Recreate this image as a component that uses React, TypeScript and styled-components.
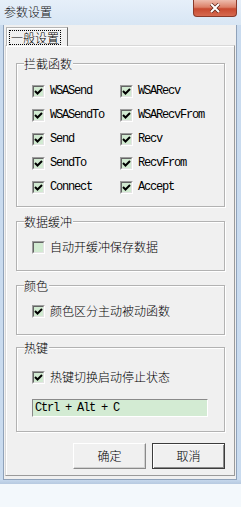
import React from 'react';
import styled, { createGlobalStyle } from 'styled-components';

const GlobalStyle = createGlobalStyle`
  body {
    margin: 0;
    background: #f3f8fc;
    font-family: "Noto Sans CJK SC", "Liberation Sans", sans-serif;
  }
`;

const cjk = `"Noto Sans CJK SC", "Liberation Sans", sans-serif`;
const mono = `"Liberation Mono", "Noto Sans CJK SC", monospace`;

const Window = styled.div`
  width: 241px;
  display: flex;
  flex-direction: column;
  background: linear-gradient(90deg, #c9dbef 0%, #dde9f6 50%, #c9dbef 100%);
`;

const TitleBar = styled.div`
  height: 25px;
  display: flex;
  justify-content: space-between;
  background: linear-gradient(#e6eff9, #d8e6f4);
`;

const Title = styled.div`
  padding: 4px 0 0 4px;
  font: 300 12px/15px ${cjk};
  color: #111;
`;

const CloseButton = styled.div`
  width: 44px;
  height: 17px;
  margin-right: 4px;
  box-sizing: border-box;
  border: 1px solid #8a3a2a;
  border-top: none;
  border-radius: 0 0 4px 4px;
  background: linear-gradient(#eebcad 0%, #dc8068 45%, #c84a30 55%, #d66a50 100%);
  display: flex;
  align-items: center;
  justify-content: center;
`;

const Client = styled.div`
  height: 455px;
  margin: 0 4px 0 3px;
  box-sizing: border-box;
  border: 1px solid #8fa2ba;
  border-top: none;
  background: #f0f0f0;
  display: flex;
  flex-direction: column;
  padding: 2px 1px 3px 1px;
`;

const BottomFrame = styled.div`
  height: 4px;
  background: linear-gradient(#c5d7ec, #b6c9e0);
`;

const TabStrip = styled.div`
  display: flex;
  padding-left: 1px;
  position: relative;
  z-index: 1;
  margin-bottom: -1px;
`;

const Tab = styled.div`
  width: 62px;
  height: 19px;
  box-sizing: border-box;
  border: 1px solid #b4b4b4;
  border-right-color: #6f6f6f;
  border-bottom: none;
  box-shadow: inset 1px 1px 0 #ffffff;
  background: #f0f0f0;
  display: flex;
  align-items: center;
  padding-left: 2px;
`;

const FocusText = styled.span`
  border: 1px dotted #000;
  padding: 0 1px;
  font: 300 12px/13px ${cjk};
  color: #000;
`;

const Panel = styled.div`
  flex: 1;
  border: 1px solid #d8d8d8;
  border-right-color: #9a9a9a;
  border-bottom-color: #9a9a9a;
  box-shadow: inset 1px 1px 0 #ffffff;
  padding: 0 9px 0 10px;
  display: flex;
  flex-direction: column;
`;

const Group = styled.div<{ $mt: number; $pt: number; $pb: number }>`
  position: relative;
  margin-top: ${(p) => p.$mt}px;
  padding: ${(p) => p.$pt}px 0 ${(p) => p.$pb}px 15px;
  border: 1px solid #b2b2b2;
  box-shadow: inset 1px 1px 0 #ffffff, 1px 1px 0 #ffffff;
`;

const GroupLabel = styled.span`
  position: absolute;
  top: -7px;
  left: 7px;
  padding: 0 1px 0 0;
  background: #f0f0f0;
  font: 300 12px/13px ${cjk};
  color: #000;
`;

const CheckGrid = styled.div`
  display: grid;
  grid-template-columns: 88px 1fr;
`;

const CheckRow = styled.div`
  height: 24px;
  display: flex;
  align-items: center;
  gap: 5px;
`;

const Box = styled.span`
  width: 13px;
  height: 13px;
  box-sizing: border-box;
  border: 1px solid;
  border-color: #9c9c9c #ffffff #ffffff #9c9c9c;
  background: #e4e4e4;
  display: flex;
`;

const BoxInner = styled.span`
  flex: 1;
  border: 1px solid;
  border-color: #646464 #e3e3e3 #e3e3e3 #646464;
  background: #d1ead1;
  display: flex;
  align-items: center;
  justify-content: center;
`;

const Label = styled.span<{ $mono?: boolean }>`
  font: ${(p) => (p.$mono ? `12px/14px ${mono}` : `300 12px/14px ${cjk}`)};
  letter-spacing: ${(p) => (p.$mono ? '-1.2px' : '0')};
  color: #000;
  white-space: nowrap;
`;

const HotkeyField = styled.div`
  width: 176px;
  height: 18px;
  margin-top: 10px;
  box-sizing: border-box;
  border: 1px solid;
  border-color: #8a8a8a #ffffff #ffffff #8a8a8a;
  background: #d3ebd3;
  display: flex;
  align-items: center;
  padding-left: 2px;
  font: 12px/14px ${mono};
  letter-spacing: -1.2px;
  color: #000;
`;

const ButtonRow = styled.div`
  display: flex;
  justify-content: flex-end;
  gap: 6px;
  margin-top: 11px;
`;

const Button = styled.div<{ $default?: boolean }>`
  width: 73px;
  height: 26px;
  box-sizing: border-box;
  border: 1px solid;
  border-color: ${(p) => (p.$default ? '#3c3c3c' : '#ffffff #8a8a8a #8a8a8a #ffffff')};
  box-shadow: ${(p) =>
    p.$default
      ? 'inset 1px 1px 0 #ffffff, inset -1px -1px 0 #8a8a8a'
      : 'inset -1px -1px 0 #d0d0d0'};
  background: #f0f0f0;
  display: flex;
  align-items: center;
  justify-content: center;
  font: 300 12px/14px ${cjk};
  color: #000;
`;

const CheckMark = () => (
  <svg width="9" height="9" viewBox="0 0 9 9">
    <path d="M1 4 L3.5 6.5 L8 2" fill="none" stroke="#000" strokeWidth="2" />
  </svg>
);

const Check: React.FC<{ label: string; checked?: boolean; mono?: boolean }> = ({ label, checked, mono: m }) => (
  <CheckRow>
    <Box>
      <BoxInner>{checked && <CheckMark />}</BoxInner>
    </Box>
    <Label $mono={m}>{label}</Label>
  </CheckRow>
);

const hooks = [
  ['WSASend', 'WSARecv'],
  ['WSASendTo', 'WSARecvFrom'],
  ['Send', 'Recv'],
  ['SendTo', 'RecvFrom'],
  ['Connect', 'Accept'],
];

const App: React.FC = () => {
  return (
    <>
      <GlobalStyle />
      <Window>
        <TitleBar>
          <Title>参数设置</Title>
          <CloseButton>
            <svg width="12" height="10" viewBox="0 0 12 10">
              <path d="M2 1 L10 9 M10 1 L2 9" stroke="#5a2418" strokeWidth="3.4" />
              <path d="M2 1 L10 9 M10 1 L2 9" stroke="#ffffff" strokeWidth="2" />
            </svg>
          </CloseButton>
        </TitleBar>
        <Client>
          <TabStrip>
            <Tab>
              <FocusText>一般设置</FocusText>
            </Tab>
          </TabStrip>
          <Panel>
            <Group $mt={17} $pt={15} $pb={7}>
              <GroupLabel>拦截函数</GroupLabel>
              <CheckGrid>
                {hooks.flat().map((name) => (
                  <Check key={name} label={name} checked mono />
                ))}
              </CheckGrid>
            </Group>
            <Group $mt={14} $pt={13} $pb={11}>
              <GroupLabel>数据缓冲</GroupLabel>
              <Check label="自动开缓冲保存数据" />
            </Group>
            <Group $mt={14} $pt={13} $pb={11}>
              <GroupLabel>颜色</GroupLabel>
              <Check label="颜色区分主动被动函数" checked />
            </Group>
            <Group $mt={12} $pt={17} $pb={14}>
              <GroupLabel>热键</GroupLabel>
              <Check label="热键切换启动停止状态" checked />
              <HotkeyField>Ctrl + Alt + C</HotkeyField>
            </Group>
            <ButtonRow>
              <Button>确定</Button>
              <Button $default>取消</Button>
            </ButtonRow>
          </Panel>
        </Client>
        <BottomFrame />
      </Window>
    </>
  );
};

export default App;
